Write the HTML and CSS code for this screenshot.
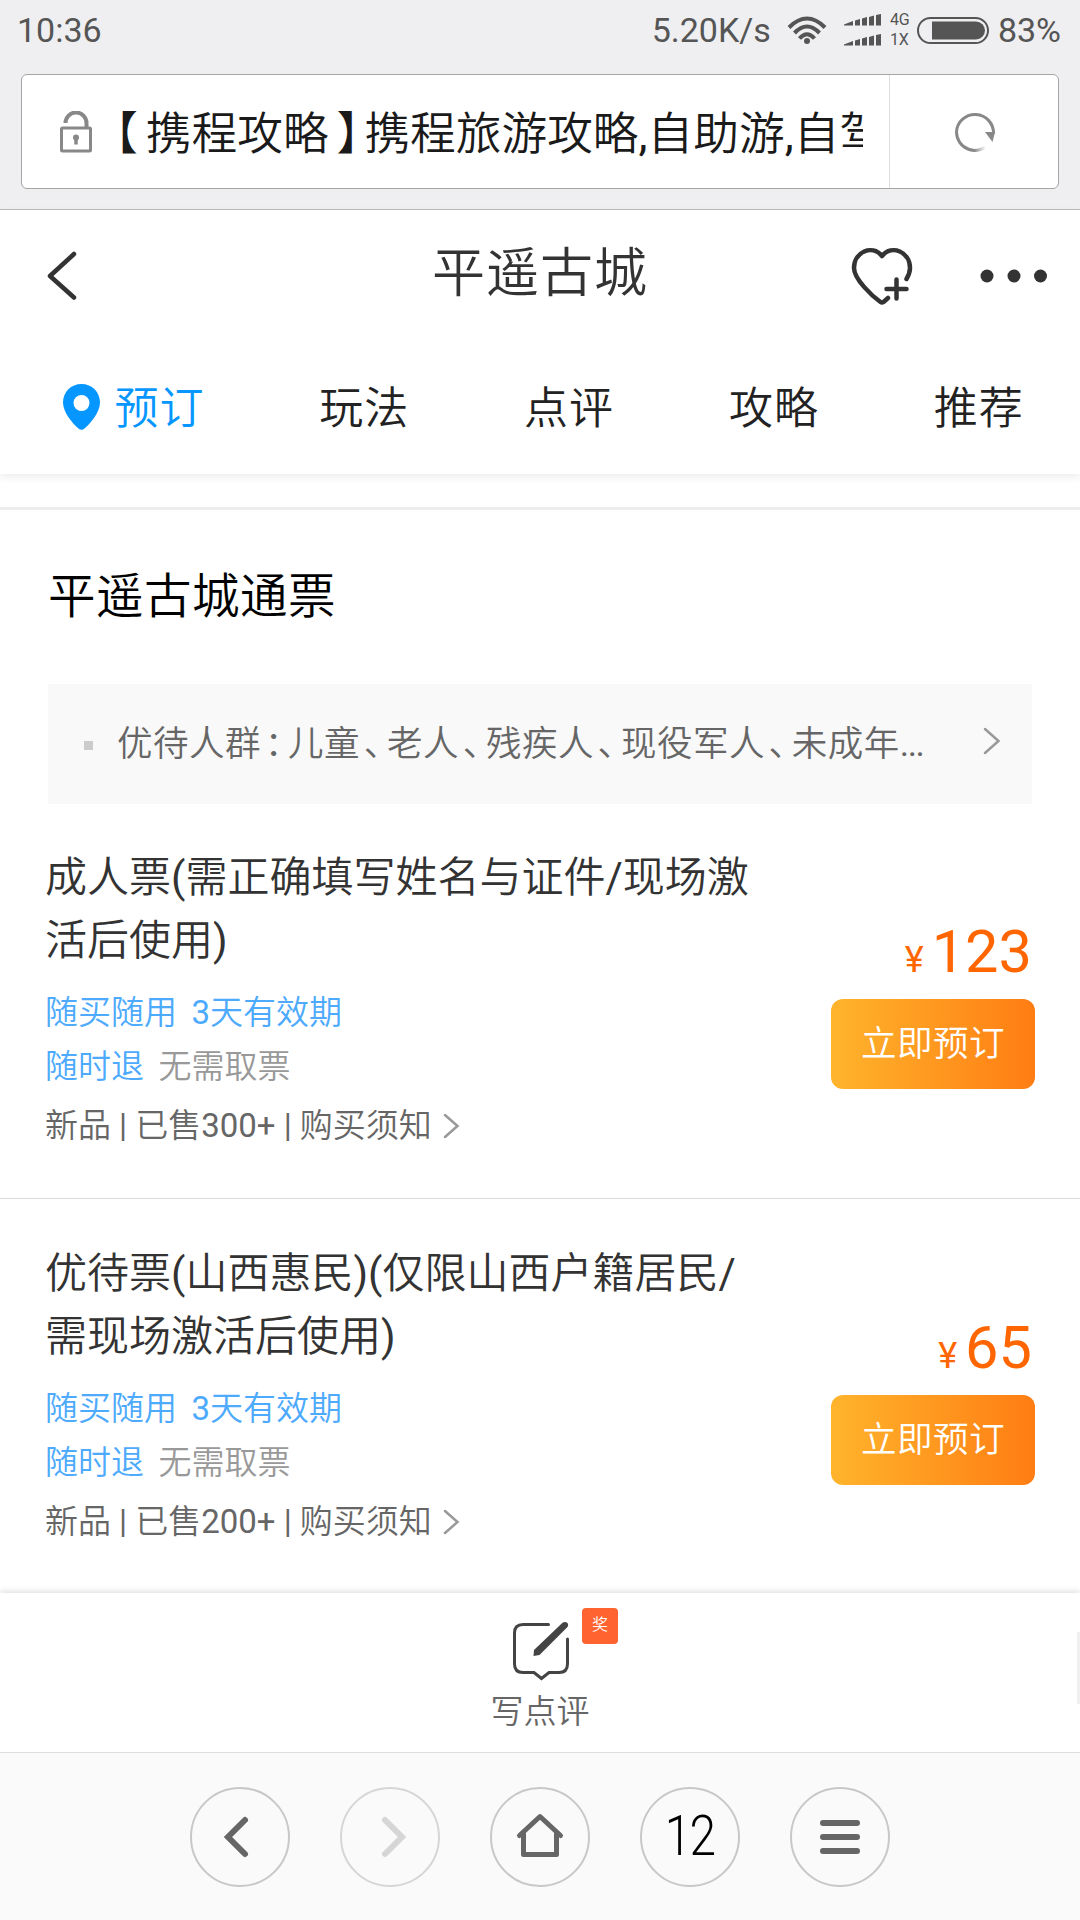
FILE: index.html
```html
<!DOCTYPE html>
<html lang="zh-CN">
<head>
<meta charset="utf-8">
<title>平遥古城</title>
<link rel="stylesheet" href="styles.css">
</head>
<body>
<div class="screen">
  <header class="chrome">
    <div class="status">
      <span class="clock">10:36</span>
      <span class="speed">5.20K/s</span>
      <svg class="wifi" width="40" height="30" viewBox="0 0 40 30" fill="none" stroke="#555" stroke-width="4">
        <path d="M2 12.5Q20-5.5 38 12.5"/>
        <path d="M7.5 18Q20 5 32.500 18"/>
        <path d="M12.500 23.500Q20 15 27.500 23.500"/>
        <circle cx="20" cy="26" r="3" fill="#555" stroke="none"/>
      </svg>
      <div class="signals">
        <svg width="38" height="12" viewBox="0 0 38 12" fill="#555"><path d="M0 10.500L9 7V11.500H0zM11 6.500L16 5V11.500H11zM18 4.500L23 3V11.500H18zM25 3L30 1.500V11.500H25zM32 1L37 0V11.500H32z"/></svg>
        <svg width="38" height="12" viewBox="0 0 38 12" fill="#555"><path d="M0 10.500L9 7V11.500H0zM11 6.500L16 5V11.500H11zM18 4.500L23 3V11.500H18zM25 3L30 1.500V11.500H25zM32 1L37 0V11.500H32z"/></svg>
      </div>
      <div class="networks"><span>4G</span><span>1X</span></div>
      <svg class="battery" width="72" height="27" viewBox="0 0 72 27">
        <rect x="1" y="1" width="70" height="25" rx="12.500" fill="none" stroke="#555" stroke-width="2"/>
        <path d="M15 4.500H59a9 9 0 0 1 0 18H15z" fill="#555"/>
      </svg>
      <span class="charge">83%</span>
    </div>
    <div class="address">
      <svg class="lock" width="34" height="42" viewBox="0 0 34 42" fill="none" stroke="#888">
        <path d="M5.500 12a10.500 10.500 0 0 1 21 0v5" stroke-width="4"/>
        <rect x="1.500" y="17" width="29" height="23" rx="1" stroke-width="3"/>
        <circle cx="16" cy="26.500" r="3" fill="#888" stroke="none"/>
        <path d="M16 26v7.500" stroke-width="3.500"/>
      </svg>
      <div class="page-title"><span class="open">【</span>携程攻略<span class="close">】</span>携程旅游攻略<b>,</b>自助游<b>,</b>自驾</div>
      <div class="reload">
        <svg width="44" height="44" viewBox="0 0 44 44">
          <defs><linearGradient id="tail" x1="0" x2="1"><stop offset=".55" stop-color="#888"/><stop offset=".9" stop-color="#888" stop-opacity="0"/></linearGradient></defs>
          <path d="M40.500 24A18.500 18.500 0 1 0 3.500 22" fill="none" stroke="#888" stroke-width="3"/>
          <path d="M3.500 22A18.500 18.500 0 0 0 36 34" fill="none" stroke="url(#tail)" stroke-width="3"/>
          <path d="M32 22H42L39.500 32z" fill="#888"/>
        </svg>
      </div>
    </div>
  </header>

  <section class="top">
    <div class="titlebar">
      <svg class="back" width="32" height="52" viewBox="0 0 32 52" fill="none" stroke="#333" stroke-width="4.500" stroke-linecap="round" stroke-linejoin="round"><path d="M28 4L4 26L28 47.500"/></svg>
      <h1>平遥古城</h1>
      <svg class="heart" width="64" height="60" viewBox="0 0 64 60" fill="none" stroke="#333" stroke-width="4.500" stroke-linecap="round" stroke-linejoin="round">
        <path d="M38 52L33.500 56Q32 57 30.500 56C22 50 4 33 4 22C4 6 22-2 32 10C42-2 60 6 60 22Q60 27 56.500 33"/>
        <path d="M36.500 43H56.500M46.500 33.500V52.500"/>
      </svg>
      <svg class="more" width="68" height="14" viewBox="0 0 68 14" fill="#333"><circle cx="7" cy="7" r="6.500"/><circle cx="34" cy="7" r="6.500"/><circle cx="60.500" cy="7" r="6.500"/></svg>
    </div>
    <nav class="tabs">
      <a class="tab active"><svg width="37" height="46" viewBox="0 0 37 46"><path fill="#0696ff" fill-rule="evenodd" d="M18.500 0C8 0 0 8 0 18.500C0 28 9 39 15.500 44.500Q18.500 47 21.500 44.500C28 39 37 28 37 18.500C37 8 29 0 18.500 0zM18.500 11a8 8 0 1 1 0 16a8 8 0 1 1 0-16z"/></svg>预订</a>
      <a class="tab">玩法</a>
      <a class="tab">点评</a>
      <a class="tab">攻略</a>
      <a class="tab">推荐</a>
    </nav>
  </section>

  <main class="content">
    <h2>平遥古城通票</h2>
    <div class="notice">
      <i class="bullet"></i>
      <p>优待人群<span class="mark">：</span>儿童<span class="mark">、</span>老人<span class="mark">、</span>残疾人<span class="mark">、</span>现役军人<span class="mark">、</span>未成年<span class="dots">...</span></p>
      <svg width="18" height="28" viewBox="0 0 18 28" fill="none" stroke="#999" stroke-width="2.500" stroke-linecap="round"><path d="M2 2L15.500 14L2 26"/></svg>
    </div>

    <article class="ticket">
      <div class="info">
        <h3>成人票<b>(</b>需正确填写姓名与证件<b>/</b>现场激<br>活后使用<b>)</b></h3>
        <div class="tags">
          <p><span>随买随用</span><span><b>3</b>天有效期</span></p>
          <p><span>随时退</span><span class="muted">无需取票</span></p>
        </div>
        <p class="meta"><span>新品 <b>|</b> 已售<b>300+ |</b> 购买须知</span><svg width="17" height="26" viewBox="0 0 17 26" fill="none" stroke="#999" stroke-width="2.500" stroke-linecap="round"><path d="M2 2L14.500 13L2 24"/></svg></p>
      </div>
      <div class="buy">
        <div class="price"><small>¥</small>123</div>
        <a class="button">立即预订</a>
      </div>
    </article>

    <article class="ticket">
      <div class="info">
        <h3>优待票<b>(</b>山西惠民<b>)(</b>仅限山西户籍居民<b>/</b><br>需现场激活后使用<b>)</b></h3>
        <div class="tags">
          <p><span>随买随用</span><span><b>3</b>天有效期</span></p>
          <p><span>随时退</span><span class="muted">无需取票</span></p>
        </div>
        <p class="meta"><span>新品 <b>|</b> 已售<b>200+ |</b> 购买须知</span><svg width="17" height="26" viewBox="0 0 17 26" fill="none" stroke="#999" stroke-width="2.500" stroke-linecap="round"><path d="M2 2L14.500 13L2 24"/></svg></p>
      </div>
      <div class="buy">
        <div class="price"><small>¥</small>65</div>
        <a class="button">立即预订</a>
      </div>
    </article>
  </main>

  <section class="review">
    <div class="review-icon">
      <svg width="60" height="62" viewBox="0 0 60 62" fill="none" stroke="#444" stroke-width="3">
        <path d="M37.500 4.500H12Q3.500 4.500 3.500 13V44Q3.500 52.500 12 52.500H23L30.500 58.500L38 52.500H48Q56.500 52.500 56.500 44V19" stroke-linecap="round"/>
        <path d="M22.500 36L23 30L51.500 2.800Q54 1 56.500 3Q58 5.500 56 7.500L28.500 35z" fill="#444" stroke="none"/>
      </svg>
      <span class="badge">奖</span>
    </div>
    <span class="review-label">写点评</span>
    <i class="scroll-thumb"></i>
  </section>

  <footer class="browser-bar">
    <a class="round"><svg width="60" height="60" viewBox="0 0 60 60" fill="none" stroke="#666" stroke-width="6" stroke-linecap="round"><path d="M35 13L18 30L35 47"/></svg></a>
    <a class="round disabled"><svg width="60" height="60" viewBox="0 0 60 60" fill="none" stroke="#d6d6d6" stroke-width="6" stroke-linecap="round"><path d="M25 13L42 30L25 47"/></svg></a>
    <a class="round"><svg width="60" height="60" viewBox="0 0 60 60" fill="none" stroke="#666" stroke-width="5" stroke-linecap="round" stroke-linejoin="round"><path d="M9.500 28.500L30 9.500L50.500 28.500M13.500 27V47.500H46.500V27"/></svg></a>
    <a class="round"><span class="count">12</span></a>
    <a class="round"><svg width="60" height="60" viewBox="0 0 60 60" stroke="#666" stroke-width="6" stroke-linecap="round"><path d="M13 16H47M13 30H47M13 44H47"/></svg></a>
  </footer>
</div>
</body>
</html>
```
FILE: styles.css
```css
* { box-sizing: border-box; margin: 0; padding: 0; }

body {
  width: 1080px;
  height: 1920px;
  overflow: hidden;
  background: #fff;
  color: #333;
  font-family: Roboto, "Noto Sans CJK SC", sans-serif;
  font-weight: 350;
}

b { font-weight: 400; }
svg { display: block; flex: none; }

.screen { display: flex; flex-direction: column; height: 1920px; }

/* status bar and address field */
.chrome { height: 210px; background: #efeff1; border-bottom: 1px solid #bbb; }

.status {
  display: flex;
  align-items: center;
  height: 74px;
  padding: 0 19px 14px 17px;
  color: #555;
  font-size: 34px;
  font-weight: 400;
}
.speed { margin-left: auto; }
.wifi { margin-left: 16px; }
.signals { display: flex; flex-direction: column; gap: 8px; margin-left: 17px; }
.networks {
  display: flex;
  flex-direction: column;
  width: 25px;
  margin-left: 8px;
  font-size: 16px;
  line-height: 20px;
}
.battery { margin-left: 2px; }
.charge { margin-left: 9px; }

.address {
  display: flex;
  align-items: center;
  height: 115px;
  margin: 0 21px;
  border: 1px solid #a5a5a5;
  border-radius: 6px;
  background: #fff;
}
.lock { margin-left: 38px; }
.page-title {
  flex: none;
  width: 752px;
  margin-left: 17px;
  padding-top: 6px;
  overflow: hidden;
  white-space: nowrap;
  color: #1a1a1a;
  font-size: 45.700px;
  line-height: 66px;
}
.open, .close, .mark { font-feature-settings: "halt"; }
.open { margin: 0 8px 0 4px; }
.close { margin: 0 5px 0 8px; }
.reload {
  display: flex;
  flex: 1;
  align-items: center;
  align-self: stretch;
  justify-content: center;
  margin-left: 26px;
  padding-left: 1px;
  border-left: 1px solid #ddd;
}

/* place header */
.top { position: relative; height: 264px; background: #fff; box-shadow: 0 3px 8px rgba(0, 0, 0, .08); }
.titlebar { display: flex; align-items: center; height: 132px; padding: 0 32px 0 46px; }
.titlebar h1 {
  flex: 1;
  padding: 0 0 4px 152px;
  text-align: center;
  font-size: 53px;
  font-weight: 350;
  letter-spacing: 1px;
  line-height: 80px;
}
.heart { margin-right: 66px; }
.tabs { display: grid; grid-template-columns: 215px repeat(4, 204.800px); padding: 34px 0 0 0; }
.tab {
  display: flex;
  align-items: center;
  justify-content: flex-end;
  padding-right: 10.500px;
  color: #222;
  font-size: 44px;
  letter-spacing: 1px;
  line-height: 66px;
}
.tab svg { margin: 0 14.500px 4px 0; }
.tab.active { color: #0696ff; }

/* ticket list */
.content { height: 1086px; margin-top: 33px; border-top: 3px solid #ededed; }
.content h2 {
  padding: 52px 0 0 48px;
  color: #000;
  font-size: 47.500px;
  font-weight: 350;
  letter-spacing: .5px;
  line-height: 70px;
}
.notice {
  display: flex;
  align-items: center;
  height: 120px;
  margin: 52px 48px 0;
  padding: 0 31px 0 36px;
  background: #f9f9f9;
}
.bullet { width: 9px; height: 9px; margin-top: 3px; background: #ccc; }
.notice p {
  flex: 1;
  margin-left: 24px;
  color: #666;
  font-size: 35.500px;
  letter-spacing: .5px;
  line-height: 54px;
  white-space: nowrap;
}
.notice svg { margin-bottom: 6px; }
.mark { margin: 0 5px 0 3.700px; }
.dots { font-weight: 400; letter-spacing: -1.500px; }

.ticket {
  display: flex;
  justify-content: space-between;
  box-sizing: content-box;
  height: 352px;
  padding: 42px 45px 0 45px;
  border-bottom: 1px solid #d9d9d9;
}
.ticket + .ticket { height: 340px; padding-top: 43px; border-bottom: 0; }
.ticket h3 { font-size: 42px; font-weight: 350; line-height: 63px; }
.tags { margin-top: 14px; }
.tags p { display: flex; gap: 14.500px; color: #4daafc; font-size: 33px; line-height: 54px; }
.tags .muted { color: #999; }
.meta { display: flex; align-items: center; margin-top: 5px; color: #666; font-size: 33px; line-height: 54px; }
.meta svg { margin-left: 11px; }

.buy { width: 204px; padding-top: 68px; }
.price { height: 80px; padding-right: 3px; color: #ff6600; font-size: 59.500px; font-weight: 400; line-height: 76px; text-align: right; }
.price small { margin-right: 8px; font-size: 36px; }
.button {
  display: block;
  height: 90px;
  margin-top: 5px;
  border-radius: 12px;
  background: linear-gradient(90deg, #ffb42c, #ff7d13);
  color: #fff;
  font-size: 35.500px;
  letter-spacing: .5px;
  line-height: 90px;
  text-align: center;
}

/* write-a-review bar */
.review {
  position: relative;
  display: flex;
  flex-direction: column;
  align-items: center;
  height: 160px;
  padding-top: 27px;
  background: #fff;
  border-bottom: 1px solid #ddd;
  box-shadow: 0 -2px 6px rgba(0, 0, 0, .12);
}
.review-icon { position: relative; margin-left: 2px; }
.badge {
  position: absolute;
  left: 71px;
  top: -12px;
  width: 36px;
  height: 36px;
  border-radius: 4px;
  background: #ff6330;
  color: #fff;
  font-size: 16px;
  line-height: 33px;
  text-align: center;
}
.review-label { margin-top: 3px; color: #666; font-size: 33px; line-height: 54px; }
.scroll-thumb { position: absolute; right: 0; top: 39px; width: 3px; height: 72px; background: #f0f0f0; }

/* browser toolbar */
.browser-bar {
  position: relative;
  display: flex;
  flex: 1;
  gap: 50px;
  justify-content: center;
  padding-top: 34px;
  background: #fafafa;
}
.round {
  display: flex;
  align-items: center;
  justify-content: center;
  width: 100px;
  height: 100px;
  border: 2px solid #c8c8c8;
  border-radius: 50%;
}
.disabled { border-color: #d6d6d6; }
.count { padding-bottom: 3px; color: #000; font-size: 55px; letter-spacing: -2px; transform: scaleX(.87); }
```
